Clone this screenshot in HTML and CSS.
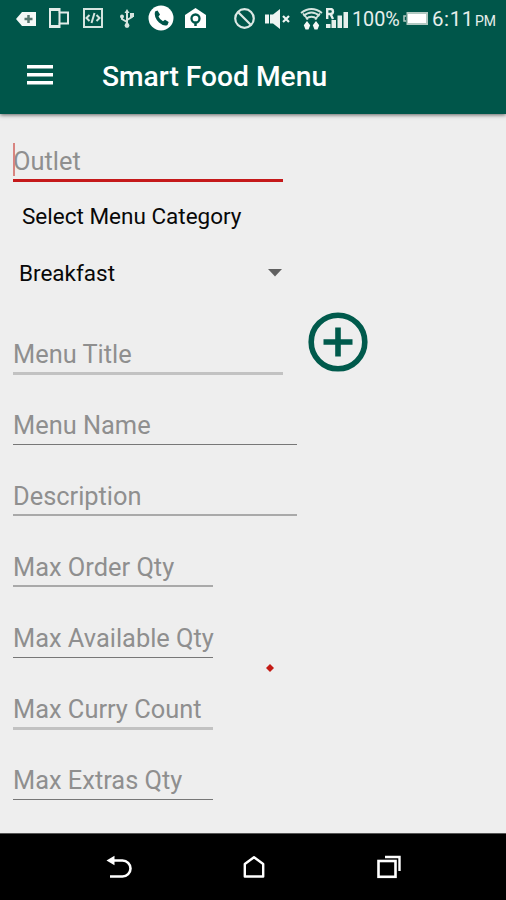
FILE: index.html
```html
<!DOCTYPE html>
<html lang="en">
<head>
<meta charset="utf-8">
<title>Smart Food Menu</title>
<link rel="stylesheet" href="styles.css">
</head>
<body>
<div class="screen">
  <header class="header">
    <div class="status">
      <svg class="ic-tag" width="20" height="14" viewBox="0 0 20 14"><path d="M0 7 6 0h14v14H6z" fill="#f4f8f6"/><path d="M12.500 3v8M8.500 7h8" stroke="#58776f" stroke-width="2.500"/></svg>
      <svg class="ic-devices" width="20" height="20" viewBox="0 0 20 20" fill="none" stroke="#e2ece9" stroke-width="2"><path d="M10.500 4.500V1H1v18h9.500v-3.500M1 2h9M1 18h9"/><rect x="10.500" y="4.500" width="8.500" height="11"/></svg>
      <svg class="ic-code" width="20" height="20" viewBox="0 0 20 20" fill="none" stroke="#d5e4df" stroke-width="2"><rect x="1" y="1" width="18" height="18"/><path d="M6.500 7 3.500 10l3 3M13.500 7l3 3-3 3M11.500 5l-3 10"/></svg>
      <svg class="ic-usb" width="14" height="19" viewBox="0 0 14 19" fill="none" stroke="#d5e4df" stroke-width="2"><path d="M7 3v12M7 13 2 10V7M7 11l5-3V5"/><path d="M7 0 9.500 4h-5z" fill="#d5e4df" stroke="none"/><circle cx="2" cy="7.500" r="2" fill="#d5e4df" stroke="none"/><path d="M10 4h4v4h-4z" fill="#d5e4df" stroke="none"/><circle cx="7" cy="16.500" r="2.400" fill="#d5e4df" stroke="none"/></svg>
      <svg class="ic-call" width="26" height="26" viewBox="0 0 26 26"><circle cx="13" cy="13" r="12.500" fill="#fff"/><path d="M7 6.500 9.500 5.500 12 9.500 10.500 11.500Q12 15 15 16.300L17 14.700 20.700 17 19.500 20Q16 21.800 11 17.500 5.500 12 7 6.500Z" fill="#00564a"/></svg>
      <svg class="ic-home" width="21" height="20" viewBox="0 0 21 20"><path d="M0 7 10.500 0 21 7v13H0z" fill="#fff"/><circle cx="10.500" cy="10.500" r="4" fill="none" stroke="#00564a" stroke-width="2.300"/><path d="M10.500 14v4" stroke="#00564a" stroke-width="2.500"/></svg>
      <svg class="ic-block" width="21" height="21" viewBox="0 0 21 21" fill="none" stroke="#dce8e4" stroke-width="2.200"><circle cx="10.500" cy="10.500" r="9.300"/><path d="m4 4 13 13"/></svg>
      <svg class="ic-mute" width="25" height="20" viewBox="0 0 25 20"><path d="M0 5.500h4v9H0zM5 5.500h3L15 0v20L8 14.500H5z" fill="#eef4f2"/><path d="m18 7 6 6m0-6-6 6" stroke="#eef4f2" stroke-width="2.200"/></svg>
      <svg class="ic-wifi" width="23" height="22" viewBox="0 0 23 22" fill="none" stroke="#d5e4df" stroke-width="1.800"><path d="M1 5Q11.500-3 22 5M3.500 8Q11.500 1 19.500 8M6 11q5.500-4.500 11 0M3 5.500l5 6M20 5.500l-5 6"/><path d="M7 13l3.200 4.200-1.700 4.300h-3l-1.700-4.300zM16 13l3.200 4.200-1.700 4.300h-3l-1.700-4.300z" fill="#f4f8f6" stroke="none"/></svg>
      <svg class="ic-signal" width="22" height="20" viewBox="0 0 22 20" fill="#e6efec"><path d="M0 16h4.500v4H0zM5.500 12H10v8H5.500zM11.500 7.500H16V20h-4.500zM17.500 4H22v16h-4.500z"/><path d="M1.200 11V1h3.300a2.500 2.500 0 0 1 0 5H1.200M4.500 6 7 11" fill="none" stroke="#e6efec" stroke-width="2.400"/></svg>
      <span class="battery-text">100%</span>
      <svg class="ic-battery" width="26" height="15" viewBox="0 0 26 15"><path d="M3 5H1v5h2" fill="none" stroke="#b2c9c2" stroke-width="1.500"/><path d="M3.500 1H25v13H3.500z" fill="#b2c9c2"/><path d="M5 3h18v9H5z" fill="#fff"/></svg>
      <span class="clock">6:11</span><span class="pm">PM</span>
    </div>
    <div class="toolbar">
      <svg class="menu" width="28" height="20" viewBox="0 0 28 20" fill="#fff"><path d="M1 0h26v3.500H1zM1 8h26v3.500H1zM1 16h26v3.500H1z"/></svg>
      <h1 class="title">Smart Food Menu</h1>
    </div>
  </header>
  <main class="form">
    <div class="field outlet"><span class="caret"></span><span class="hint">Outlet</span></div>
    <div class="label">Select Menu Category</div>
    <div class="spinner"><span>Breakfast</span><svg width="14" height="8" viewBox="0 0 14 8"><path d="M0 0h14L7 7.500z" fill="#606060"/></svg></div>
    <div class="title-row">
      <div class="field medium soft"><span class="hint">Menu Title</span></div>
      <svg class="add" width="60" height="60" viewBox="0 0 60 60" fill="none" stroke="#005a4c"><circle cx="30" cy="30" r="26.800" stroke-width="5.600"/><path d="M30 15.500v29M15.500 30h29" stroke-width="5.600"/></svg>
    </div>
    <div class="field wide name"><span class="hint">Menu Name</span></div>
    <div class="field wide mid"><span class="hint">Description</span></div>
    <div class="field short mid"><span class="hint">Max Order Qty</span></div>
    <div class="field short"><span class="hint">Max Available Qty</span></div>
    <div class="field short soft curry"><span class="hint">Max Curry Count</span></div>
    <div class="field short extras"><span class="hint">Max Extras Qty</span></div>
    <svg class="marker" width="8" height="8" viewBox="0 0 8 8"><path d="m4 0 4 4-4 4-4-4z" fill="#c41a14"/></svg>
  </main>
  <nav class="nav">
    <svg width="26" height="24" viewBox="0 0 26 24" fill="none" stroke="#fff" stroke-width="2.600"><path d="M6 5.500h10.500a7.900 7.900 0 0 1 0 16H4"/><path d="M.500 5.500 8.500.800v9.400z" fill="#fff" stroke="none"/></svg>
    <svg class="nav-home" width="22" height="24" viewBox="0 0 22 24" fill="none" stroke="#fff" stroke-width="2.400"><path d="M1.800 21.500V9L11 2.200 20.200 9v12.500z" stroke-linejoin="round"/></svg>
    <svg width="24" height="24" viewBox="0 0 24 24" fill="none" stroke="#fff"><rect x="1.500" y="6" width="17" height="15.800" stroke-width="2.600"/><path d="M8 2h14.500v14" stroke-width="2.400"/></svg>
  </nav>
</div>
</body>
</html>
```
FILE: styles.css
```css
* { box-sizing: border-box; }
body { margin: 0; background: #eee; font-family: Roboto, sans-serif; }
svg { display: block; flex: none; }
.screen { width: 506px; height: 900px; display: flex; flex-direction: column; overflow: hidden; }
.header { height: 114px; flex: none; background: #00564a; box-shadow: 0 1px 4px rgba(0,0,0,.6); z-index: 1; }
.status { height: 37px; display: flex; align-items: center; padding-left: 16px; color: #e6efec; white-space: nowrap; }
.ic-devices { margin: -1px 0 0 13px; }
.ic-code { margin: -1px 0 0 14px; }
.ic-usb { margin-left: 17px; }
.ic-call { margin: -2px 0 0 14px; }
.ic-home { margin: -1px 0 0 11px; }
.ic-block { margin: -1px 0 0 28px; }
.ic-mute { margin-left: 10px; }
.ic-wifi { margin-left: 10px; }
.ic-signal { margin: -2px 0 0 3px; }
.battery-text { width: 51px; margin-left: 4px; font-size: 19.8px; margin-top: 1px; }
.ic-battery { margin-left: 0; }
.clock { width: 43px; margin-left: 3px; font-size: 20.5px; letter-spacing: .6px; margin-top: 1px; }
.pm { font-size: 14px; margin-top: 5px; }
.toolbar { height: 76px; display: flex; align-items: center; padding-left: 26px; }
.title { margin: 3px 0 0 48px; font-size: 28.2px; font-weight: 500; color: #fff; line-height: 32px; white-space: nowrap; }
.form { position: relative; height: 719px; padding-left: 13px; display: flex; flex-direction: column; }
.field { height: 71px; flex: none; display: flex; align-items: flex-end; padding-bottom: 4px; border-bottom: 1px solid #777; color: #8f8f8f; }
.hint { font-size: 25.4px; line-height: 30px; white-space: nowrap; }
.mid { border-bottom: 2px solid #a9a9a9; padding-bottom: 3px; }
.soft { border-bottom: 3px solid #c2c2c2; padding-bottom: 3px; }
.outlet { position: relative; width: 270px; height: 68px; border-bottom: 3px solid #c5191a; padding-bottom: 3px; }
.caret { position: absolute; left: 0; top: 29px; width: 2px; height: 33px; background: #d88480; }
.wide { width: 284px; }
.medium { width: 270px; }
.short { width: 200px; }
.name, .extras { height: 70px; }
.curry { height: 72px; }
.label { margin-top: 20px; padding-left: 9px; font-size: 22.5px; line-height: 28px; color: #080808; }
.spinner { width: 270px; height: 28px; margin-top: 29px; padding: 0 1px 0 6px; display: flex; justify-content: space-between; align-items: center; font-size: 22.5px; line-height: 28px; color: #080808; }
.title-row { height: 88px; display: flex; align-items: flex-end; }
.add { margin: 0 0 3px 25px; }
.marker { position: absolute; left: 266px; top: 550px; }
.nav { height: 67px; flex: none; background: #000; border-top: 1px solid #555; display: flex; justify-content: space-between; padding: 21px 105px 0 106px; }
.nav-home { margin-right: 2px; }
```
